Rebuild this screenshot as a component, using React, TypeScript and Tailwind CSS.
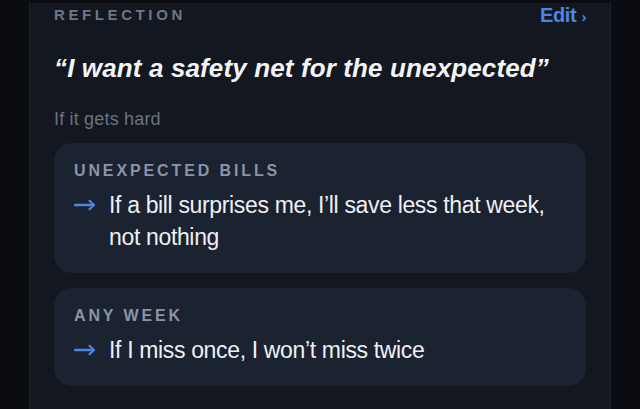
import React from "react";

const rules = [
  {
    title: "UNEXPECTED BILLS",
    text: "If a bill surprises me, I’ll save less that week, not nothing",
  },
  {
    title: "ANY WEEK",
    text: "If I miss once, I won’t miss twice",
  },
];

function Arrow() {
  return (
    <svg width="22" height="12" viewBox="0 0 22 12" fill="none" className="shrink-0">
      <path d="M1 6h18.5" stroke="#4a86e8" strokeWidth="2.4" strokeLinecap="round" />
      <path
        d="M15.5 1.8L20 6l-4.5 4.2"
        stroke="#4a86e8"
        strokeWidth="2.2"
        strokeLinecap="round"
        strokeLinejoin="round"
      />
    </svg>
  );
}

export default function App() {
  return (
    <div
      className="h-[409px] w-[640px] overflow-hidden bg-[#0a0c11] px-[29px]"
      style={{ fontFamily: '"Liberation Sans", Arial, sans-serif' }}
    >
      <div className="h-full border-x border-[#1e2330] bg-[#131720] px-[24px]">
        <div className="mt-[3px] flex h-[24px] items-center justify-between">
          <span className="text-[15px] font-semibold tracking-[0.24em] text-[#6e7686]">
            REFLECTION
          </span>
          <button className="text-[20px] font-semibold tracking-[-0.02em] text-[#4a86e8]">
            Edit <span className="text-[15px]">›</span>
          </button>
        </div>

        <h2 className="mt-[25px] text-[26px] font-bold italic leading-[32px] tracking-[0.005em] text-[#f3f4f6]">
          “I want a safety net for the unexpected”
        </h2>

        <p className="mt-[23px] text-[18px] font-medium leading-[24px] tracking-[0.01em] text-[#6b7280]">
          If it gets hard
        </p>

        <div className="mt-[12px] flex flex-col gap-[15px]">
          {rules.map((r) => (
            <div
              key={r.title}
              className="rounded-[18px] bg-[#1b2230] px-[20px] pb-[20px] pt-[18px]"
            >
              <div className="text-[16px] font-bold leading-[20px] tracking-[0.18em] text-[#8a94a6]">
                {r.title}
              </div>
              <div className="mt-[8px] flex gap-[13px]">
                <div className="flex h-[32px] items-center">
                  <Arrow />
                </div>
                <p className="text-[23px] leading-[32px] tracking-[-0.015em] text-[#eef0f4]">
                  {r.text}
                </p>
              </div>
            </div>
          ))}
        </div>
      </div>
    </div>
  );
}
